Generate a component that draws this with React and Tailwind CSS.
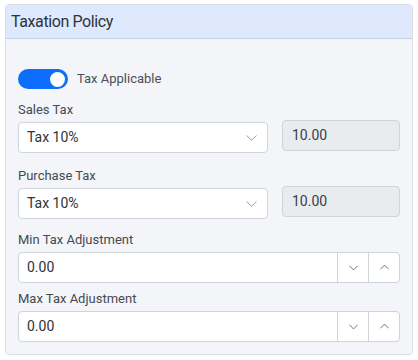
import React from "react";

const ChevronDown = ({ className }) => (
  <svg viewBox="0 0 16 16" className={className} fill="none" stroke="currentColor" strokeWidth="1.2">
    <path d="M2 5.5l6 6 6-6" />
  </svg>
);

const ChevronUp = ({ className }) => (
  <svg viewBox="0 0 16 16" className={className} fill="none" stroke="currentColor" strokeWidth="1.2">
    <path d="M2 10.5l6-6 6 6" />
  </svg>
);

const Label = ({ text, className = "" }) => (
  <div className={`h-[18px] leading-[18px] text-[13px] text-[#444a52] ${className}`}>{text}</div>
);

const SelectRow = ({ label, value, rate, className }) => (
  <div className={className}>
    <Label text={label} />
    <div className="mt-[3px] flex gap-[14px]">
      <div className="w-[250px] h-[31px] flex items-center justify-between bg-white border border-[#ced4da] rounded-[4px] pl-[8px] pr-[9px]">
        <span className="text-[14px] text-[#2f3338]">{value}</span>
        <ChevronDown className="w-[13px] h-[13px] text-[#8a99ad]" />
      </div>
      <div className="flex-1 h-[31px] -mt-[2px] flex items-center bg-[#e9ecef] border border-[#ced4da] rounded-[4px] pl-[9px] text-[14px] text-[#3a3f45]">
        {rate}
      </div>
    </div>
  </div>
);

const NumberRow = ({ label, value, className }) => (
  <div className={className}>
    <Label text={label} />
    <div className="mt-[3px] h-[31px] flex bg-white border border-[#ced4da] rounded-[4px]">
      <div className="flex-1 flex items-center pl-[8px] text-[14px] text-[#2f3338]">{value}</div>
      <button className="w-[31px] flex items-center justify-center border-l border-[#ced4da]">
        <ChevronDown className="w-[11px] h-[11px] text-[#4b5563]" />
      </button>
      <button className="w-[31px] flex items-center justify-center border-l border-[#ced4da]">
        <ChevronUp className="w-[11px] h-[11px] text-[#4b5563]" />
      </button>
    </div>
  </div>
);

export default function App() {
  return (
    <div className="bg-white w-[418px] h-[360px] pt-[4px] px-[5px]" style={{ fontFamily: "Roboto, 'Open Sans', sans-serif" }}>
      <div className="w-[408px] border border-[#dcdfe4] rounded-[4px] overflow-hidden bg-[#f4f5f9]">
        {/* Header */}
        <div className="h-[34px] flex items-center px-[5px] bg-[#dfe9fd] border-b border-[#c5d1e4]">
          <h2 className="text-[16px] tracking-[-0.4px] text-[#2b3440]">Taxation Policy</h2>
        </div>

        {/* Body */}
        <div className="px-[12px] pt-[30px] pb-[12px]">
          <div className="flex items-center gap-[9px]">
            <div className="w-[50px] h-[20px] rounded-full bg-[#0d6efd] flex items-center justify-end pr-[3px]">
              <div className="w-[15px] h-[15px] rounded-full bg-white"></div>
            </div>
            <span className="text-[13px] text-[#4a4f57]">Tax Applicable</span>
          </div>

          <SelectRow label="Sales Tax" value="Tax 10%" rate="10.00" className="mt-[12px]" />
          <SelectRow label="Purchase Tax" value="Tax 10%" rate="10.00" className="mt-[14px]" />
          <NumberRow label="Min Tax Adjustment" value="0.00" className="mt-[12px]" />
          <NumberRow label="Max Tax Adjustment" value="0.00" className="mt-[7px]" />
        </div>
      </div>
    </div>
  );
}
